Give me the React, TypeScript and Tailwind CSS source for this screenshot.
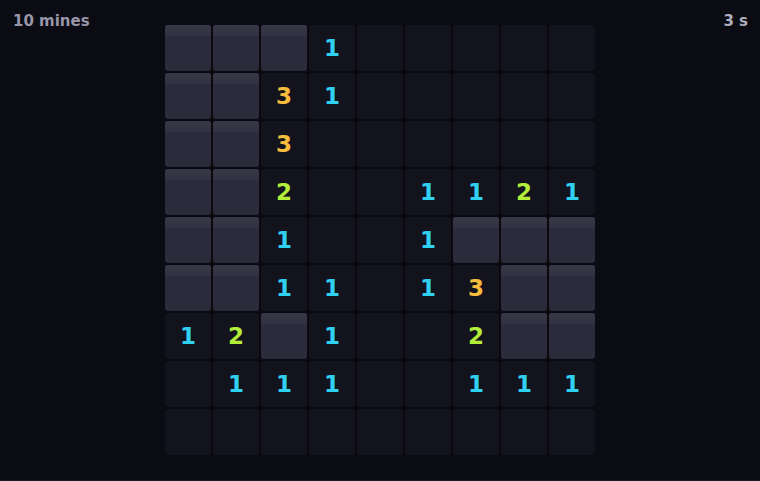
const U = -1;

// board state: -1 = covered, 0 = empty, n = neighbouring mines
const BOARD: number[][] = [
  [U, U, U, 1, 0, 0, 0, 0, 0],
  [U, U, 3, 1, 0, 0, 0, 0, 0],
  [U, U, 3, 0, 0, 0, 0, 0, 0],
  [U, U, 2, 0, 0, 1, 1, 2, 1],
  [U, U, 1, 0, 0, 1, U, U, U],
  [U, U, 1, 1, 0, 1, 3, U, U],
  [1, 2, U, 1, 0, 0, 2, U, U],
  [0, 1, 1, 1, 0, 0, 1, 1, 1],
  [0, 0, 0, 0, 0, 0, 0, 0, 0],
];

const NUM_COLORS: Record<number, string> = {
  1: "text-[#2fd0f0]",
  2: "text-[#b4ec3a]",
  3: "text-[#f7bb3c]",
};

function Cell({ value }: { value: number }) {
  if (value === U) {
    return (
      <div className="w-[46px] h-[46px] rounded-[3px] overflow-hidden flex flex-col bg-[#2c2b3c]">
        <div className="h-[11px] bg-gradient-to-b from-[#383747] to-[#333243]" />
      </div>
    );
  }
  return (
    <div className="w-[46px] h-[46px] rounded-[3px] bg-[#13131d] flex items-center justify-center">
      {value > 0 && (
        <span className={`text-[23px] font-bold leading-none pt-px ${NUM_COLORS[value]}`}>{value}</span>
      )}
    </div>
  );
}

export default function App() {
  return (
    <div className="w-[760px] h-[481px] bg-[#0b0b14] border-b border-[#1a1a2a] font-['DejaVu_Sans',sans-serif] flex flex-col">
      {/* Header */}
      <div className="h-[25px] px-[12px] pt-[11px] flex justify-between text-[15px] leading-5 font-bold">
        <span className="text-[#9896a8] pl-px">10 mines</span>
        <span className="text-[#b0afbe]">3 s</span>
      </div>

      {/* Board */}
      <div className="flex justify-center">
        <div className="grid grid-cols-9 gap-[2px] bg-[#09090f]">
          {BOARD.flatMap((row, r) =>
            row.map((v, c) => <Cell key={`${r}-${c}`} value={v} />)
          )}
        </div>
      </div>
    </div>
  );
}
